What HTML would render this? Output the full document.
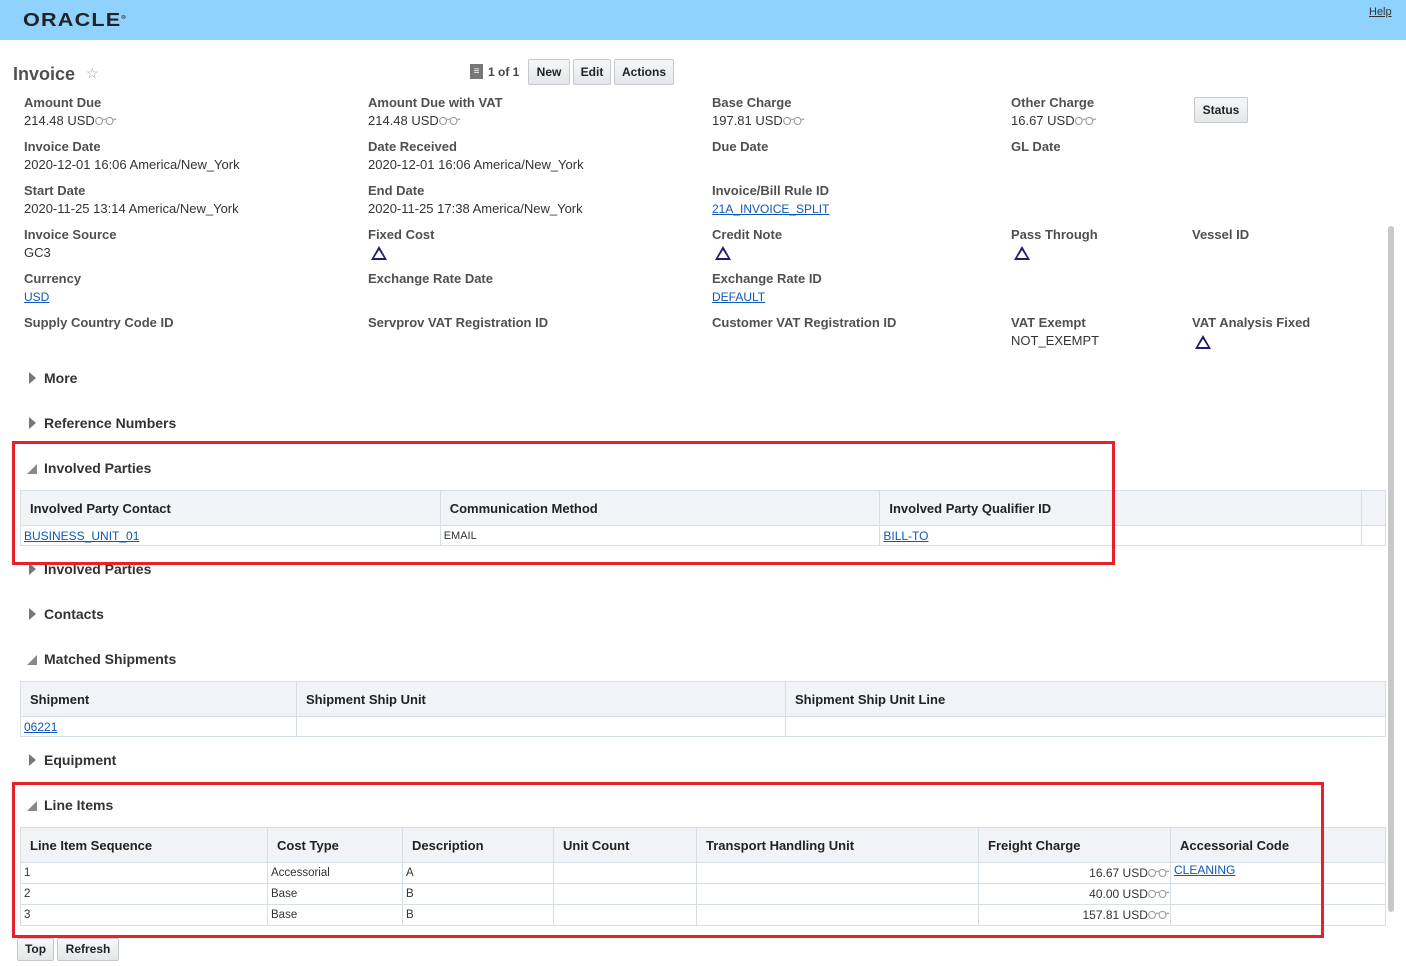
<!DOCTYPE html>
<html><head><meta charset="utf-8"><style>
*{margin:0;padding:0;box-sizing:border-box}
body{width:1406px;height:966px;position:relative;overflow:hidden;background:#fff;font-family:"Liberation Sans",Arial,sans-serif;color:#333}
.a{position:absolute;white-space:nowrap}
.l{position:absolute;font-weight:bold;font-size:13px;color:#505050;line-height:16px;white-space:nowrap}
.v{position:absolute;font-size:13px;color:#333;line-height:16px;white-space:nowrap}
a,.lk{color:#0f57b8;text-decoration:underline}
.gl{color:#999;font-size:11px;letter-spacing:-1px}
.tri{position:absolute;width:0;height:0;border-left:8px solid transparent;border-right:8px solid transparent;border-bottom:14px solid #1d1d6b}
.tri:after{content:"";position:absolute;left:-5px;top:4px;border-left:5px solid transparent;border-right:5px solid transparent;border-bottom:8px solid #fff}
.sec{position:absolute;font-weight:bold;font-size:14px;color:#333;line-height:16px}
.cr{position:absolute;width:0;height:0;border-top:6px solid transparent;border-bottom:6px solid transparent;border-left:7px solid #777}
.cd{position:absolute;width:0;height:0;border-left:10px solid transparent;border-bottom:10px solid #888}
.btn{position:absolute;border:1px solid #c5c8cc;background:linear-gradient(#f6f7f8,#e4e6e9);border-radius:2px;font-weight:bold;font-size:12px;color:#222;text-align:center}
table{position:absolute;border-collapse:collapse;font-size:11px;color:#333}
td,th{border:1px solid #d6dfe6;padding:0 3px;text-align:left;white-space:nowrap}
th{background:#f2f3f6;font-size:13px;font-weight:bold;color:#222;height:35px;padding-left:9px}
td{height:20px}
.li td{height:21px;font-size:11.5px}
.fc{text-align:right!important;padding-right:1px!important;font-size:12px!important}
.red{position:absolute;border:3px solid #e8202a}
</style></head><body>
<div class="a" style="left:0;top:0;width:1406px;height:40px;background:#8ed2fd"></div>
<div class="a" style="left:23px;top:10px;font-size:18px;font-weight:bold;letter-spacing:1px;color:#222;transform:scaleX(1.2);transform-origin:left">ORACLE<sup style="font-size:5px">®</sup></div>
<div class="a" style="left:1369px;top:6px;font-size:11px;color:#333;text-decoration:underline">Help</div>

<div class="a" style="left:13px;top:64px;font-size:18px;font-weight:bold;color:#505050">Invoice</div>
<div class="a" style="left:86px;top:65px;font-size:14px;color:#999">☆</div>
<div class="a" style="left:470px;top:64px;width:13px;height:15px;background:#777;color:#fff;font-size:10px;text-align:center;line-height:15px">≡</div>
<div class="a" style="left:488px;top:65px;font-size:12px;font-weight:bold;color:#444">1 of 1</div>
<div class="btn" style="left:528px;top:59px;width:42px;height:26px;line-height:24px">New</div>
<div class="btn" style="left:573px;top:59px;width:38px;height:26px;line-height:24px">Edit</div>
<div class="btn" style="left:614px;top:59px;width:60px;height:26px;line-height:24px">Actions</div>
<div class="btn" style="left:1194px;top:97px;width:54px;height:26px;line-height:24px">Status</div>

<div class="l" style="left:24px;top:95px">Amount Due</div><div class="v" style="left:24px;top:113px">214.48 USD<span class="gl">ᏅᏅ</span></div>
<div class="l" style="left:368px;top:95px">Amount Due with VAT</div><div class="v" style="left:368px;top:113px">214.48 USD<span class="gl">ᏅᏅ</span></div>
<div class="l" style="left:712px;top:95px">Base Charge</div><div class="v" style="left:712px;top:113px">197.81 USD<span class="gl">ᏅᏅ</span></div>
<div class="l" style="left:1011px;top:95px">Other Charge</div><div class="v" style="left:1011px;top:113px">16.67 USD<span class="gl">ᏅᏅ</span></div>

<div class="l" style="left:24px;top:139px">Invoice Date</div><div class="v" style="left:24px;top:157px">2020-12-01 16:06 America/New_York</div>
<div class="l" style="left:368px;top:139px">Date Received</div><div class="v" style="left:368px;top:157px">2020-12-01 16:06 America/New_York</div>
<div class="l" style="left:712px;top:139px">Due Date</div>
<div class="l" style="left:1011px;top:139px">GL Date</div>

<div class="l" style="left:24px;top:183px">Start Date</div><div class="v" style="left:24px;top:201px">2020-11-25 13:14 America/New_York</div>
<div class="l" style="left:368px;top:183px">End Date</div><div class="v" style="left:368px;top:201px">2020-11-25 17:38 America/New_York</div>
<div class="l" style="left:712px;top:183px">Invoice/Bill Rule ID</div><div class="v lk" style="left:712px;top:201px;font-size:12px">21A_INVOICE_SPLIT</div>

<div class="l" style="left:24px;top:227px">Invoice Source</div><div class="v" style="left:24px;top:245px">GC3</div>
<div class="l" style="left:368px;top:227px">Fixed Cost</div><div class="tri" style="left:371px;top:246px"></div>
<div class="l" style="left:712px;top:227px">Credit Note</div><div class="tri" style="left:715px;top:246px"></div>
<div class="l" style="left:1011px;top:227px">Pass Through</div><div class="tri" style="left:1014px;top:246px"></div>
<div class="l" style="left:1192px;top:227px">Vessel ID</div>

<div class="l" style="left:24px;top:271px">Currency</div><div class="v lk" style="left:24px;top:289px;font-size:12px">USD</div>
<div class="l" style="left:368px;top:271px">Exchange Rate Date</div>
<div class="l" style="left:712px;top:271px">Exchange Rate ID</div><div class="v lk" style="left:712px;top:289px;font-size:12px">DEFAULT</div>

<div class="l" style="left:24px;top:315px">Supply Country Code ID</div>
<div class="l" style="left:368px;top:315px">Servprov VAT Registration ID</div>
<div class="l" style="left:712px;top:315px">Customer VAT Registration ID</div>
<div class="l" style="left:1011px;top:315px">VAT Exempt</div><div class="v" style="left:1011px;top:333px">NOT_EXEMPT</div>
<div class="l" style="left:1192px;top:315px">VAT Analysis Fixed</div><div class="tri" style="left:1195px;top:335px"></div>

<div class="cr" style="left:29px;top:372px"></div><div class="sec" style="left:44px;top:370px">More</div>
<div class="cr" style="left:29px;top:417px"></div><div class="sec" style="left:44px;top:415px">Reference Numbers</div>
<div class="cd" style="left:27px;top:464px"></div><div class="sec" style="left:44px;top:460px">Involved Parties</div>

<table style="left:20px;top:490px;width:1366px">
<tr><th style="width:420px">Involved Party Contact</th><th style="width:440px">Communication Method</th><th style="width:482px">Involved Party Qualifier ID</th><th style="width:24px"></th></tr>
<tr><td><span class="lk" style="font-size:12px">BUSINESS_UNIT_01</span></td><td>EMAIL</td><td><span class="lk" style="font-size:12px">BILL-TO</span></td><td></td></tr>
</table>
<div class="cr" style="left:29px;top:563px"></div><div class="sec" style="left:44px;top:561px">Involved Parties</div>
<div class="red" style="left:12px;top:441px;width:1103px;height:124px"></div>

<div class="cr" style="left:29px;top:608px"></div><div class="sec" style="left:44px;top:606px">Contacts</div>
<div class="cd" style="left:27px;top:655px"></div><div class="sec" style="left:44px;top:651px">Matched Shipments</div>
<table style="left:20px;top:681px;width:1366px">
<tr><th style="width:276px">Shipment</th><th style="width:489px">Shipment Ship Unit</th><th>Shipment Ship Unit Line</th></tr>
<tr><td><span class="lk" style="font-size:12px">06221</span></td><td></td><td></td></tr>
</table>
<div class="cr" style="left:29px;top:754px"></div><div class="sec" style="left:44px;top:752px">Equipment</div>
<div class="cd" style="left:27px;top:801px"></div><div class="sec" style="left:44px;top:797px">Line Items</div>
<table class="li" style="left:20px;top:827px;width:1366px">
<tr><th style="width:247px">Line Item Sequence</th><th style="width:135px">Cost Type</th><th style="width:151px">Description</th><th style="width:143px">Unit Count</th><th style="width:282px">Transport Handling Unit</th><th style="width:192px">Freight Charge</th><th>Accessorial Code</th></tr>
<tr><td>1</td><td>Accessorial</td><td>A</td><td></td><td></td><td class="fc">16.67 USD<span class="gl">ᏅᏅ</span></td><td style="vertical-align:top"><span class="lk" style="font-size:12px">CLEANING</span></td></tr>
<tr><td>2</td><td>Base</td><td>B</td><td></td><td></td><td class="fc">40.00 USD<span class="gl">ᏅᏅ</span></td><td></td></tr>
<tr><td>3</td><td>Base</td><td>B</td><td></td><td></td><td class="fc">157.81 USD<span class="gl">ᏅᏅ</span></td><td></td></tr>
</table>
<div class="red" style="left:12px;top:782px;width:1312px;height:156px"></div>

<div class="btn" style="left:17px;top:938px;width:37px;height:23px;line-height:21px">Top</div>
<div class="btn" style="left:57px;top:938px;width:62px;height:23px;line-height:21px">Refresh</div>
<div class="a" style="left:1388px;top:226px;width:6px;height:686px;background:#c8c8c8;border-radius:3px"></div>
</body></html>
